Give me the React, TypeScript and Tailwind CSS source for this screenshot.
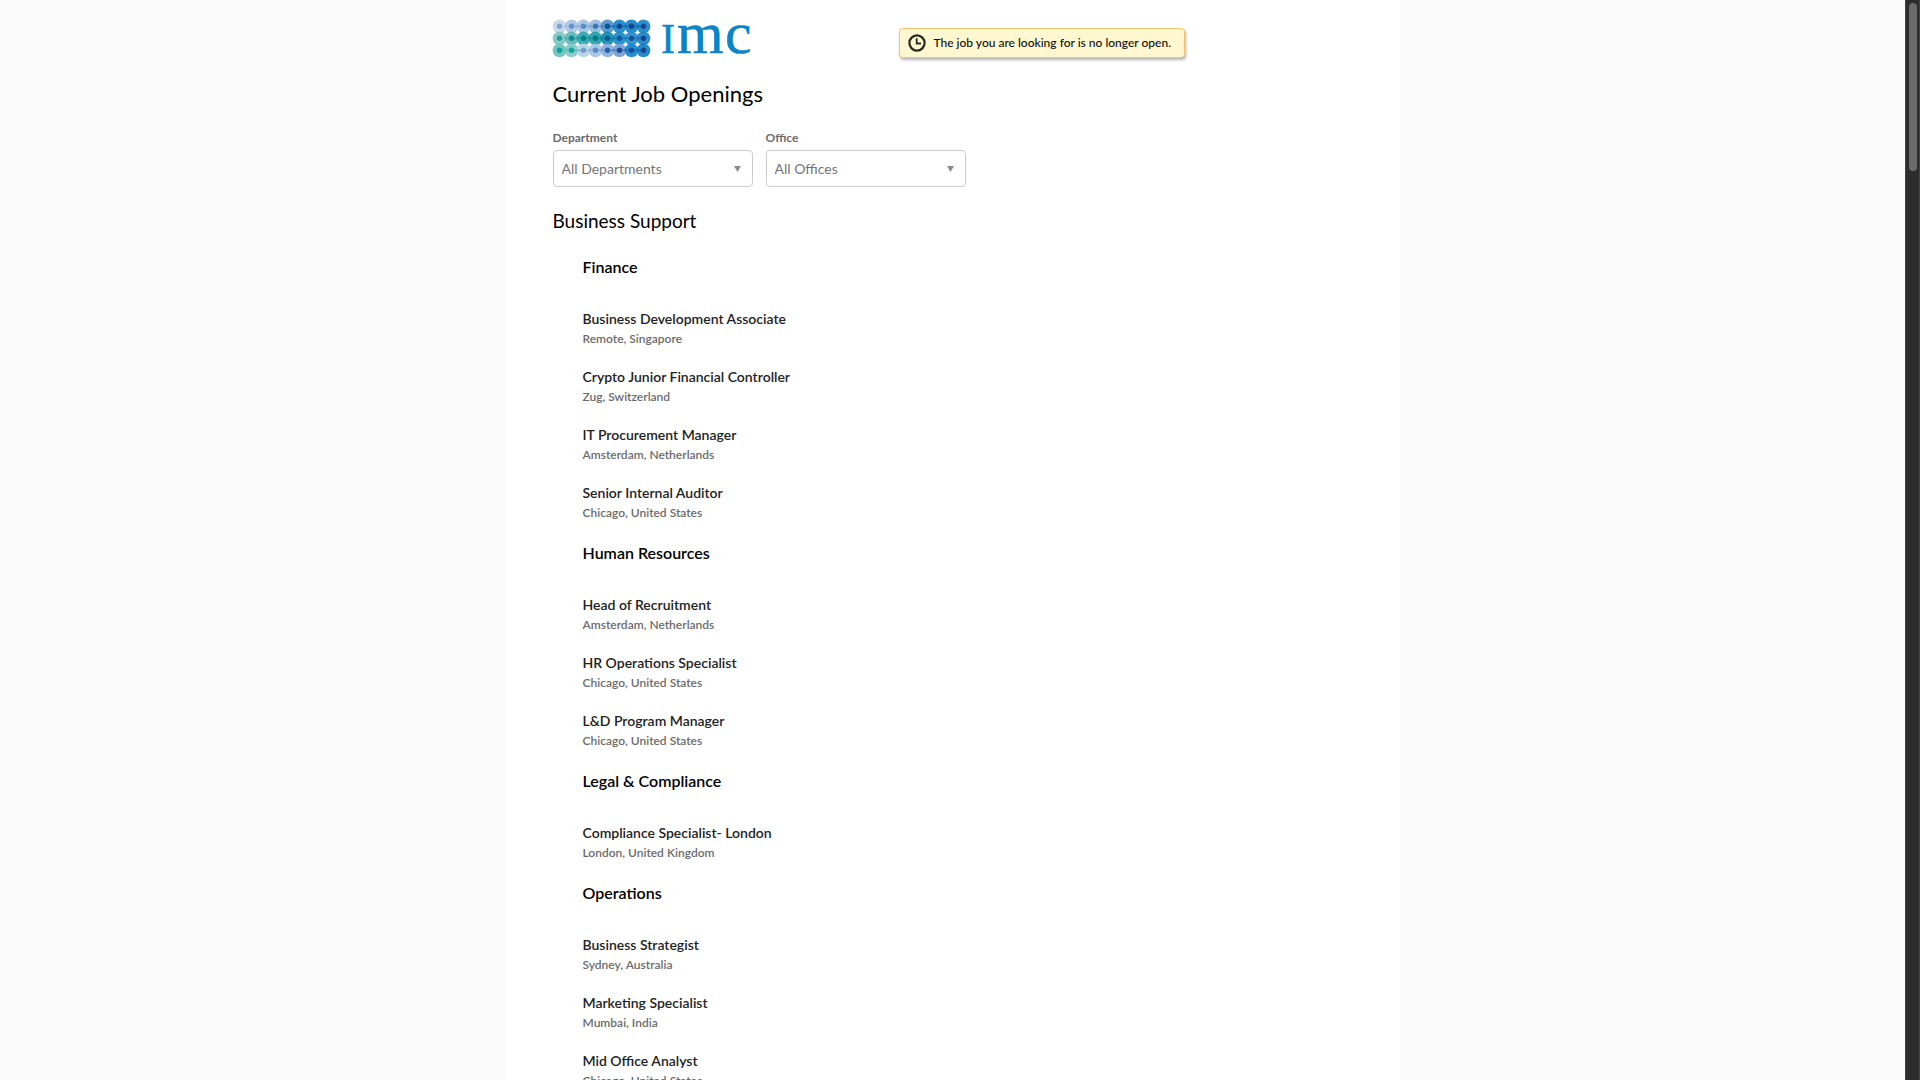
type Job = { title: string; location: string };
type Team = { name: string; jobs: Job[] };

const teams: Team[] = [
  {
    name: 'Finance',
    jobs: [
      { title: 'Business Development Associate', location: 'Remote, Singapore' },
      { title: 'Crypto Junior Financial Controller', location: 'Zug, Switzerland' },
      { title: 'IT Procurement Manager', location: 'Amsterdam, Netherlands' },
      { title: 'Senior Internal Auditor', location: 'Chicago, United States' },
    ],
  },
  {
    name: 'Human Resources',
    jobs: [
      { title: 'Head of Recruitment', location: 'Amsterdam, Netherlands' },
      { title: 'HR Operations Specialist', location: 'Chicago, United States' },
      { title: 'L&D Program Manager', location: 'Chicago, United States' },
    ],
  },
  {
    name: 'Legal & Compliance',
    jobs: [{ title: 'Compliance Specialist- London', location: 'London, United Kingdom' }],
  },
  {
    name: 'Operations',
    jobs: [
      { title: 'Business Strategist', location: 'Sydney, Australia' },
      { title: 'Marketing Specialist', location: 'Mumbai, India' },
      { title: 'Mid Office Analyst', location: 'Chicago, United States' },
    ],
  },
];

// Halo and core colour of every dot in the logo, row by row.
const dots: [string, string][][] = [
  [
    ['#c3d5e6', '#7fa6d2'],
    ['#a9c4e2', '#6494ca'],
    ['#a3c1e1', '#5a8cc5'],
    ['#94b7db', '#3b76b5'],
    ['#4a90c6', '#08559b'],
    ['#1583c8', '#17468f'],
    ['#0f80c8', '#17468f'],
    ['#1583c8', '#1b4792'],
  ],
  [
    ['#7fc4c3', '#21a0a4'],
    ['#5cb5b5', '#0a8f96'],
    ['#2ba3a8', '#05828f'],
    ['#1f9aa6', '#04788c'],
    ['#0d86ab', '#045f92'],
    ['#1787c4', '#0a5ba4'],
    ['#2489cb', '#17529c'],
    ['#1a7fc4', '#17468f'],
  ],
  [
    ['#66bfb9', '#07a3a0'],
    ['#7cc6c2', '#13a5a5'],
    ['#b4cfe8', '#6f9fd1'],
    ['#a3c0e2', '#5a8cc8'],
    ['#85abd9', '#2463ae'],
    ['#6f9bd2', '#1d4897'],
    ['#0d83ca', '#124f9b'],
    ['#0d7cc4', '#17468f'],
  ],
];

function Logo() {
  return (
    <svg viewBox="0 0 200 38" className="h-[38px] w-[200px] shrink-0 overflow-visible" role="img" aria-label="IMC">
      {dots.map((row, r) =>
        row.map(([halo], c) => (
          <circle key={`${r}-${c}`} cx={6.5 + c * 12} cy={6.3 + r * 12} r={6.9} fill={halo} fillOpacity={0.9} />
        )),
      )}
      {dots.map((row, r) =>
        row.slice(0, 7).map(([, core], c) => (
          <path key={`${r}-${c}`} d={`M${6.5 + c * 12} ${6.3 + r * 12}h12`} stroke={core} strokeWidth={1.6} opacity={c === 0 ? 0.2 : 0.45} />
        )),
      )}
      {dots.map((row, r) =>
        row.map(([, core], c) => (
          <circle key={`${r}-${c}`} cx={6.5 + c * 12} cy={6.3 + r * 12} r={2.7} fill={core} />
        )),
      )}
      <text y="33" fill="#0c84c8" stroke="#0c84c8" strokeWidth="0.5" fontFamily="'Liberation Serif', serif">
        <tspan x="108" fontSize="42">I</tspan>
        <tspan x="124" fontSize="60">m</tspan>
        <tspan x="172" fontSize="60">c</tspan>
      </text>
    </svg>
  );
}

function Filter({ id, label, all }: { id: string; label: string; all: string }) {
  return (
    <div className="flex w-[200px] flex-col gap-[2px]">
      <label htmlFor={id} className="text-xs leading-5 font-bold text-[#6b6b6b]">
        {label}
      </label>
      <div className="relative">
        <select
          id={id}
          className="h-[37px] w-full appearance-none rounded border border-[#cccccc] bg-white px-2 text-sm text-[#757575]"
        >
          <option>{all}</option>
        </select>
        <svg viewBox="0 0 7 6" className="pointer-events-none absolute top-4 right-3 h-[6px] w-[7px]" aria-hidden="true">
          <path d="M0 0h7L3.5 6z" fill="#8c8c8c" />
        </svg>
      </div>
    </div>
  );
}

function Notice() {
  return (
    <div
      role="status"
      className="flex h-[30px] w-[286px] items-center gap-2 rounded border border-[#f0c36d] bg-[#fff7cf] px-2 text-xs font-medium text-[#111111] shadow-[1px_2px_3px_rgba(0,0,0,0.3)]"
    >
      <svg viewBox="0 0 18 18" className="size-[18px] shrink-0" fill="none" stroke="#222a1c" aria-hidden="true">
        <circle cx="9" cy="9" r="7.6" strokeWidth="2.2" />
        <path d="M8.7 4.2v5.3h4.3" strokeWidth="1.8" />
      </svg>
      <span className="whitespace-nowrap">The job you are looking for is no longer open.</span>
    </div>
  );
}

export default function App() {
  return (
    <div className="flex h-screen overflow-hidden bg-[#fafafa] font-['Lato',sans-serif] text-black">
      <div className="min-w-0 flex-1 overflow-hidden">
        <main className="mx-auto min-h-full max-w-4xl bg-white px-12 pt-5">
          <header className="flex items-center gap-[146px]">
            <Logo />
            <div className="pt-2">
              <Notice />
            </div>
          </header>
          <h1 className="mt-5 text-[22px] leading-8">Current Job Openings</h1>
          <form className="mt-[18px] flex gap-[13px]">
            <Filter id="department" label="Department" all="All Departments" />
            <Filter id="office" label="Office" all="All Offices" />
          </form>
          <h2 className="mt-5 text-[19px] leading-7">Business Support</h2>
          <div className="mt-5 flex flex-col gap-[18px] pl-[30px]">
            {teams.map((team) => (
              <section key={team.name}>
                <h3 className="mb-[30px] text-base leading-6 font-semibold">{team.name}</h3>
                <ul className="flex flex-col gap-[18px]">
                  {team.jobs.map((job) => (
                    <li key={job.title}>
                      <a href="#" className="block text-sm leading-5 font-semibold text-[#222222]">
                        {job.title}
                      </a>
                      <p className="text-xs leading-5 font-semibold text-[#6b6b6b]">{job.location}</p>
                    </li>
                  ))}
                </ul>
              </section>
            ))}
          </div>
        </main>
      </div>
      <div className="w-[15px] shrink-0 border-x border-[#444444] bg-[#2c2c2c] px-[3px] py-[3px]" aria-hidden="true">
        <div className="h-[168px] w-2 rounded-full bg-[#6b6b6b]" />
      </div>
    </div>
  );
}
